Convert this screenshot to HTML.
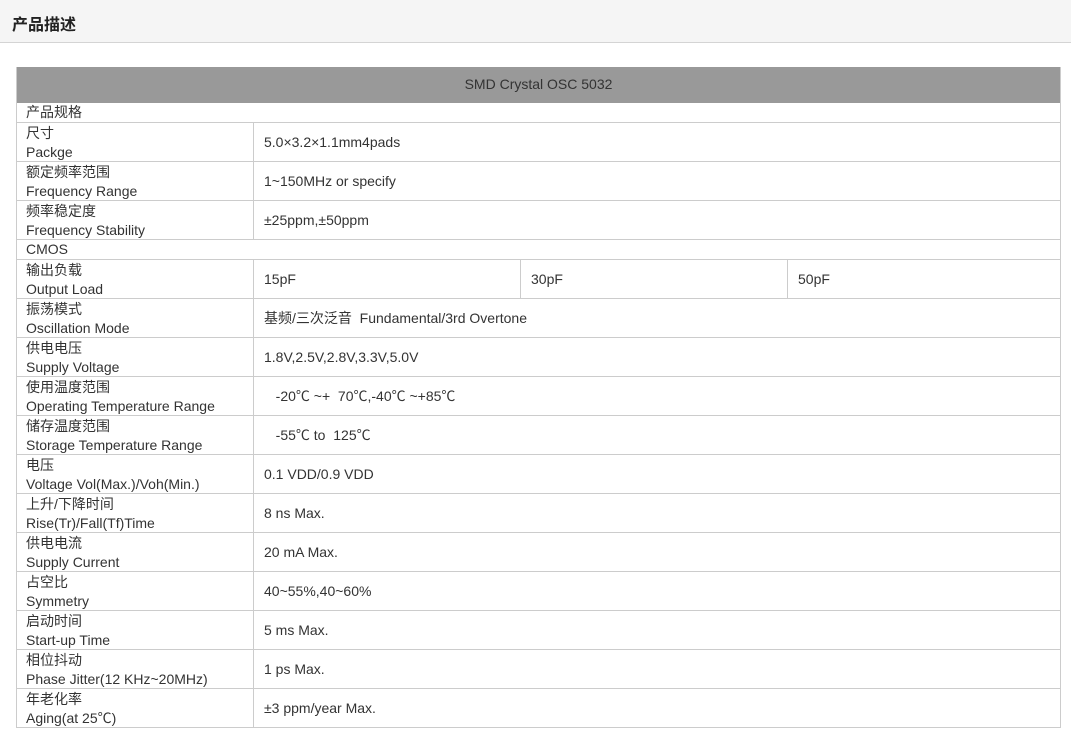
<!DOCTYPE html>
<html><head><meta charset="utf-8"><style>
*{margin:0;padding:0;box-sizing:border-box}
body{width:1071px;height:738px;background:#fff;font-family:"Liberation Sans","Noto Sans CJK SC",sans-serif;color:#333;font-size:14px;position:relative;overflow:hidden}
.top{position:absolute;left:0;top:0;width:1071px;height:43px;background:#f5f5f5;border-bottom:1px solid #d4d4d4}
.top b{position:absolute;left:12px;top:11px;font-size:16px;color:#222}
.tbl{position:absolute;left:16px;top:67px;width:1045px;border-left:1px solid #ccc;border-right:1px solid #ccc}
.hd{height:36px;background:#999;text-align:center;line-height:35px;color:#333}
.r{display:flex;height:39px;border-bottom:1px solid #ccc}
.r.s{height:20px;line-height:19px;padding-left:9px}
.l{width:237px;border-right:1px solid #ccc;padding:1px 0 0 9px;line-height:19px}
.v{flex:1;padding-left:10px;line-height:38px}
.v3{width:267px;border-right:1px solid #ccc;padding-left:10px;line-height:38px}
.v3:last-child{border-right:none;flex:1}
</style></head><body>
<div class="top"><b>产品描述</b></div>
<div class="tbl">
<div class="hd">SMD Crystal OSC 5032</div>
<div class="r s">产品规格</div>
<div class="r"><div class="l">尺寸<br>Packge</div><div class="v">5.0×3.2×1.1mm4pads</div></div>
<div class="r"><div class="l">额定频率范围<br>Frequency Range</div><div class="v">1~150MHz or specify</div></div>
<div class="r"><div class="l">频率稳定度<br>Frequency Stability</div><div class="v">±25ppm,±50ppm</div></div>
<div class="r s">CMOS</div>
<div class="r"><div class="l">输出负载<br>Output Load</div><div class="v3">15pF</div><div class="v3">30pF</div><div class="v3">50pF</div></div>
<div class="r"><div class="l">振荡模式<br>Oscillation Mode</div><div class="v">基频/三次泛音&nbsp; Fundamental/3rd Overtone</div></div>
<div class="r"><div class="l">供电电压<br>Supply Voltage</div><div class="v">1.8V,2.5V,2.8V,3.3V,5.0V</div></div>
<div class="r"><div class="l">使用温度范围<br>Operating Temperature Range</div><div class="v">&nbsp;&nbsp; -20℃ ~+&nbsp; 70℃,-40℃ ~+85℃</div></div>
<div class="r"><div class="l">储存温度范围<br>Storage Temperature Range</div><div class="v">&nbsp;&nbsp; -55℃ to&nbsp; 125℃</div></div>
<div class="r"><div class="l">电压<br>Voltage Vol(Max.)/Voh(Min.)</div><div class="v">0.1 VDD/0.9 VDD</div></div>
<div class="r"><div class="l">上升/下降时间<br>Rise(Tr)/Fall(Tf)Time</div><div class="v">8 ns Max.</div></div>
<div class="r"><div class="l">供电电流<br>Supply Current</div><div class="v">20 mA Max.</div></div>
<div class="r"><div class="l">占空比<br>Symmetry</div><div class="v">40~55%,40~60%</div></div>
<div class="r"><div class="l">启动时间<br>Start-up Time</div><div class="v">5 ms Max.</div></div>
<div class="r"><div class="l">相位抖动<br>Phase Jitter(12 KHz~20MHz)</div><div class="v">1 ps Max.</div></div>
<div class="r"><div class="l">年老化率<br>Aging(at 25℃)</div><div class="v">±3 ppm/year Max.</div></div>
</div>
</body></html>
